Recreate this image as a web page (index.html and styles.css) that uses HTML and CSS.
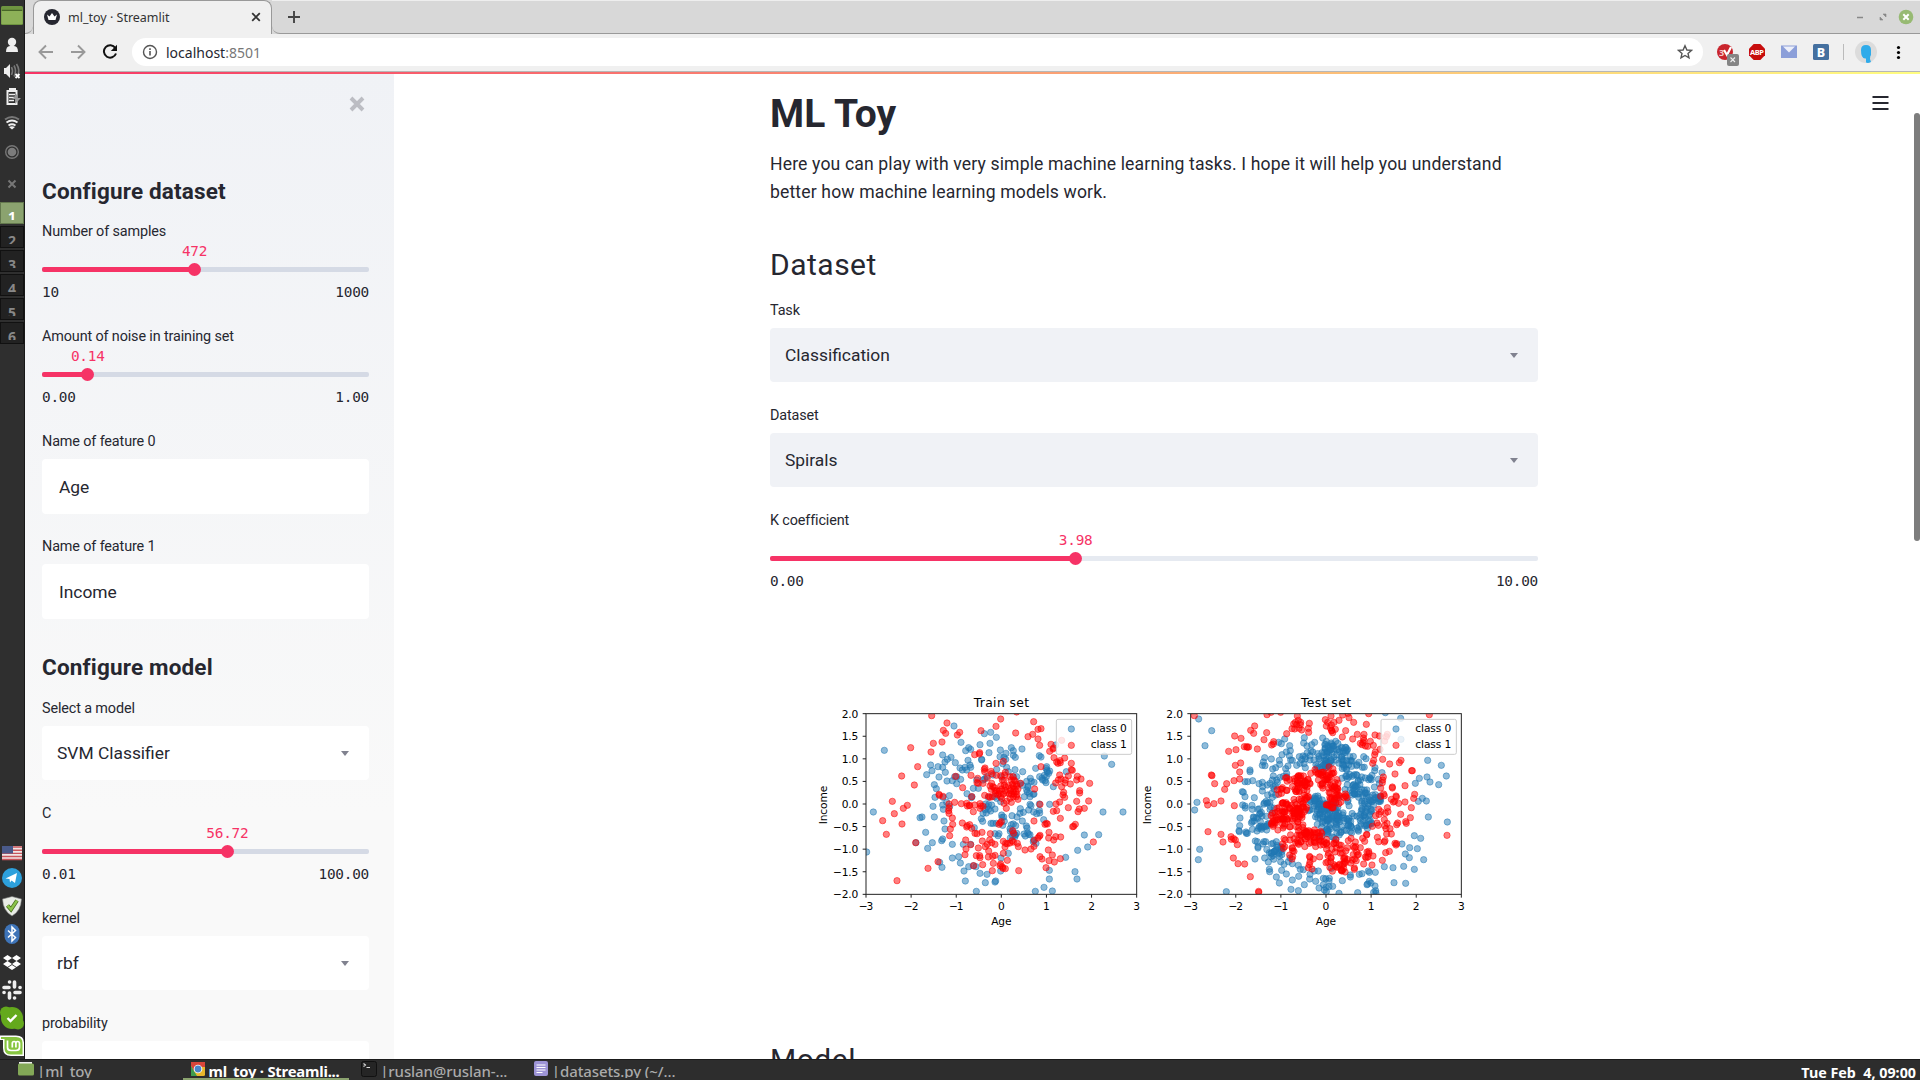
FILE: index.html
```html
<!DOCTYPE html>
<html lang="en">
<head>
<meta charset="utf-8">
<title>ml_toy · Streamlit</title>
<link rel="stylesheet" href="styles.css">
</head>
<body>
<div class="desktop">
  <aside class="panel">
    <div class="tray tray-top">
      <svg class="ic-folder" viewBox="0 0 24 30"><rect x="1" y="5" width="22" height="19" rx="1.500" fill="#6e9440"/><path d="M1.500 10h21v13h-21z" fill="#8db158"/><path d="M2 9.300h20" stroke="#3f5a22" stroke-width="1"/></svg>
      <svg class="ic" viewBox="0 0 24 26"><circle cx="12" cy="10" r="4.200" fill="#eee"/><path d="M6 20q0-6 4-6h4q4 0 4 6z" fill="#eee"/></svg>
      <svg class="ic" viewBox="0 0 24 26"><path d="M4 10h2l4-4v14l-4-4h-2z" fill="#eee"/><path d="M11.500 9q2 4 0 8M14 7.500q3 5.500 0 11M16.500 6q4 6 1 12" fill="none" stroke="#777" stroke-width="1.600"/><path d="M15.500 16l4 4m0-4l-4 4" stroke="#fff" stroke-width="1.800"/></svg>
      <svg class="ic" viewBox="0 0 24 26"><path d="M10 6.500V5h5v1.500M7.500 7h9v13h-9z" fill="none" stroke="#eee" stroke-width="2"/><path d="M9 10.500h6M9 13.500h6M9 16.500h5" stroke="#eee" stroke-width="1.300"/><path d="M17 10l-5 5h4l-1 5 6-6h-4z" fill="#999"/></svg>
      <svg class="ic" viewBox="0 0 24 26"><path d="M5 9.500q7-5 14 0" fill="none" stroke="#777" stroke-width="2"/><path d="M6.500 12.500q5.500-4 11 0M8.500 15.500q3.500-2.500 7 0" fill="none" stroke="#eee" stroke-width="1.800"/><path d="M12 19.500l-3-2.500q3-1.500 6 0z" fill="#eee"/></svg>
      <svg class="ic-rec" viewBox="0 0 24 32"><circle cx="12" cy="16" r="6.300" fill="none" stroke="#777" stroke-width="1.400"/><circle cx="12" cy="16" r="4.300" fill="#7c7c7c"/></svg>
      <svg class="ic-rec" viewBox="0 0 24 32"><path d="M8.500 12.500l7 7m0-7l-7 7" stroke="#777" stroke-width="2"/></svg>
    </div>
    <div class="workspaces">
      <div class="ws on"><span>1</span></div><div class="ws"><span>2</span></div><div class="ws"><span>3</span></div>
      <div class="ws"><span>4</span></div><div class="ws"><span>5</span></div><div class="ws"><span>6</span></div>
    </div>
    <div class="tray tray-bottom">
      <svg class="ic-flag" viewBox="0 0 24 22"><path d="M2 4h20v14H2z" fill="#f0e6e6"/><path d="M2 5h20M2 8.200h20M2 11.400h20M2 14.500h20M2 17.500h20" stroke="#c9555b" stroke-width="1.400"/><path d="M2 4h11v7.500H2z" fill="#4a5a8a"/></svg>
      <svg class="ic-app" viewBox="0 0 24 28"><circle cx="12" cy="14" r="10" fill="#2da0dc"/><path d="M5.500 14.500L17 9l-2 10-3.500-2.500-1.500 2-.5-3.500z" fill="#fff"/></svg>
      <svg class="ic-app" viewBox="0 0 24 28"><path d="M12 4.500l9.500 2.500q-.5 12-9.500 17Q3 19 2.500 7z" fill="#e9ece6" stroke="#777" stroke-width=".6"/><path d="M7.500 13.500l3.500 4L17 8.500" fill="none" stroke="#456b1c" stroke-width="4"/><path d="M7.500 13.500l3.500 4L17 8.500" fill="none" stroke="#8bc34a" stroke-width="2.400"/></svg>
      <svg class="ic-app" viewBox="0 0 24 28"><rect x="4.500" y="4" width="15" height="20" rx="7.500" fill="#3e74b8"/><path d="M8 10.500l7.500 7L12 21V7l3.500 3.500-7.500 7" fill="none" stroke="#fff" stroke-width="1.500"/></svg>
      <svg class="ic-app" viewBox="0 0 24 28"><path d="M7.500 7l4.500 3-4.500 3L3 10zM16.500 7l4.500 3-4.500 3-4.500-3zM7.500 13l4.500 3-4.500 3L3 16zM16.500 13l4.500 3-4.500 3-4.500-3zM12 17l4 2.500-4 2.500-4-2.500z" fill="#fff"/></svg>
      <svg class="ic-app" viewBox="0 0 24 28"><path d="M14.500 6v5M20 16.500h-5M9.500 22v-5M4 11.500h5" stroke="#eee" stroke-width="3.600" stroke-linecap="round"/><path d="M9.500 6h.1M20 11.500h.1M14.500 22h.1M4 16.500h.1" stroke="#eee" stroke-width="3.600" stroke-linecap="round"/></svg>
      <svg class="ic-app" viewBox="0 0 24 28"><circle cx="12" cy="14" r="11" fill="#64a91c"/><circle cx="6" cy="8.500" r="6" fill="#64a91c"/><circle cx="18" cy="19.500" r="6" fill="#64a91c"/><path d="M7.500 14l3 3 6-6" fill="none" stroke="#fff" stroke-width="2.400"/></svg>
      <svg class="ic-app" viewBox="0 0 24 28"><path d="M0 3.500h16q8 0 8 7V24H11q-8 0-8-8V8H0z" fill="#fff"/><path d="M1 5h15q6.500 0 6.500 6v11.500H11q-6.500 0-6.500-6V7H1z" fill="#87c540"/><path d="M7.500 8.500v7q0 3 3.500 3h5q3.500 0 3.500-3v-4q0-2-1.800-2t-1.800 2v4m0-4q0-2-1.800-2t-1.800 2v4" fill="none" stroke="#fff" stroke-width="1.700"/></svg>
    </div>
  </aside>

  <main class="browser">
    <div class="tabs">
      <div class="tab-edge"></div>
      <div class="tab">
        <svg class="fav" viewBox="0 0 16 16"><circle cx="8" cy="8" r="8" fill="#262730"/><path d="M3 5.500l2.500 2L8 4l2.500 3.500 2.500-2-1.500 5.500h-7z" fill="#fff"/></svg>
        <span class="tab-title">ml_toy · Streamlit</span>
        <svg class="tab-x" viewBox="0 0 10 10"><path d="M1.200 1.200l7.600 7.600m0-7.600L1.200 8.800" stroke="#333" stroke-width="1.800"/></svg>
      </div>
      <div class="tab-rest">
        <svg class="plus" viewBox="0 0 12 12"><path d="M6 0v12M0 6h12" stroke="#444" stroke-width="1.900"/></svg>
        <svg class="winctl" viewBox="0 0 60 16"><path d="M3 8.500h6" stroke="#888" stroke-width="1.500"/><path d="M29 5h3v3zM26 8v3h3z" fill="#888" stroke="#888" stroke-width=".6"/><circle cx="52" cy="8" r="7.300" fill="#97ba73"/><path d="M49.300 5.300l5.400 5.400m0-5.400l-5.400 5.400" stroke="#fff" stroke-width="2"/></svg>
      </div>
    </div>
    <div class="toolbar">
      <svg class="nav" viewBox="0 0 16 16"><path d="M15 8H2M8 1.500L1.500 8 8 14.500" fill="none" stroke="#999" stroke-width="1.900"/></svg>
      <svg class="nav" viewBox="0 0 16 16"><path d="M1 8h13M8 1.500L14.500 8 8 14.500" fill="none" stroke="#999" stroke-width="1.900"/></svg>
      <svg class="nav" viewBox="0 0 16 16"><path d="M13.300 4A6.200 6.200 0 1 0 14 9.500" fill="none" stroke="#111" stroke-width="2"/><path d="M15 .8v6.200H8.800z" fill="#111"/></svg>
      <div class="url">
        <svg class="info" viewBox="0 0 16 16"><circle cx="8" cy="8" r="6.500" fill="none" stroke="#555" stroke-width="1.400"/><path d="M8 7v4.500M8 4.300v1.600" stroke="#555" stroke-width="1.600"/></svg>
        <span class="addr">localhost<i>:8501</i></span>
        <svg class="star" viewBox="0 0 16 16"><path d="M8 1.800l1.900 4.200 4.500.4-3.400 3 1 4.500L8 11.500l-4 2.400 1-4.500-3.400-3L6.100 6z" fill="none" stroke="#555" stroke-width="1.400"/></svg>
      </div>
      <svg class="exts" viewBox="0 0 208 38">
        <circle cx="16" cy="19" r="8" fill="#c9252d"/><text x="10" y="22.500" font-size="9" font-weight="700" fill="#f3c8ca">3</text><path d="M15 17l3 5 4-8" fill="none" stroke="#fff" stroke-width="2.200"/><rect x="18" y="21" width="12" height="12" rx="2" fill="#858585"/><path d="M21.500 24.500l4.500 4.500m0-4.500l-4.500 4.500" stroke="#eee" stroke-width="1.100"/>
        <path d="M44.700 11h6.600l4.700 4.700v6.600l-4.700 4.700h-6.600l-4.700-4.700v-6.600z" fill="#c70d0d"/><text x="48" y="21.800" text-anchor="middle" font-size="7.500" font-weight="700" fill="#fff" textLength="14">ABP</text>
        <path d="M72 12.500h16v12.500H72z" fill="#8c9fd9"/><path d="M74 13.500h12l-6 6z" fill="#edf0fa"/>
        <rect x="104" y="11" width="16" height="16" rx="1.500" fill="#45709f"/><text x="112" y="23.500" text-anchor="middle" font-size="12.500" font-weight="800" fill="#fff">B</text>
        <path d="M134.500 11v16" stroke="#bbb"/>
        <circle cx="157" cy="19" r="11" fill="#dcdcdc"/><path d="M152 17q0-5 5-5t5 5v5q-1 1-1 4l1 3q-3 1.500-5 .5v-4q-5 1-5-8.500z" fill="#2fabea"/>
        <circle cx="189.500" cy="14.500" r="1.600"/><circle cx="189.500" cy="19.500" r="1.600"/><circle cx="189.500" cy="24.500" r="1.600"/>
      </svg>
    </div>
    <div class="rainbow"></div>
    <div class="page">
      <section class="sidebar">
        <div class="side-top"><svg class="close" viewBox="0 0 16 16"><path d="M2 2l12 12M14 2L2 14" stroke="#bcbdc3" stroke-width="3.900"/></svg></div>
        <h2 class="first">Configure dataset</h2>
        <div class="widget"><label>Number of samples</label>
          <div class="slider"><div class="value" style="width:93.300%">472</div><div class="track"><div class="fill" style="width:46.800%"></div></div><div class="ticks"><span>10</span><span>1000</span></div></div></div>
        <div class="widget"><label>Amount of noise in training set</label>
          <div class="slider"><div class="value" style="width:28%">0.14</div><div class="track"><div class="fill" style="width:14%"></div></div><div class="ticks"><span>0.00</span><span>1.00</span></div></div></div>
        <div class="widget"><label>Name of feature 0</label><div class="box input">Age</div></div>
        <div class="widget"><label>Name of feature 1</label><div class="box input">Income</div></div>
        <h2>Configure model</h2>
        <div class="widget"><label>Select a model</label><div class="box"><span>SVM Classifier</span><b class="caret"></b></div></div>
        <div class="widget"><label>C</label>
          <div class="slider"><div class="value" style="width:113.400%">56.72</div><div class="track"><div class="fill" style="width:57%"></div></div><div class="ticks"><span>0.01</span><span>100.00</span></div></div></div>
        <div class="widget"><label>kernel</label><div class="box"><span>rbf</span><b class="caret"></b></div></div>
        <div class="widget"><label>probability</label><div class="box"></div></div>
      </section>
      <section class="content">
        <div class="column">
          <h1>ML Toy</h1>
          <p>Here you can play with very simple machine learning tasks. I hope it will help you understand<br>better how machine learning models work.</p>
          <h3>Dataset</h3>
          <div class="widget"><label>Task</label><div class="box"><span>Classification</span><b class="caret"></b></div></div>
          <div class="widget"><label>Dataset</label><div class="box"><span>Spirals</span><b class="caret"></b></div></div>
          <div class="widget"><label>K coefficient</label>
            <div class="slider"><div class="value" style="width:79.600%">3.98</div><div class="track"><div class="fill" style="width:39.800%"></div></div><div class="ticks"><span>0.00</span><span>10.00</span></div></div></div>
          <svg id="chart" class="chart" viewBox="0 0 2304 780"></svg>
          <h3 class="model">Model</h3>
        </div>
        <svg class="burger" viewBox="0 0 16 14"><path d="M0 1h16M0 7h16M0 13h16" stroke="#262730" stroke-width="2"/></svg>
        <div class="scrollbar"></div>
      </section>
    </div>
  </main>

  <footer class="taskbar">
    <div class="task"><svg viewBox="0 0 16 16"><path d="M1 1h13v3H1z" fill="#eee"/><rect y="2.500" width="16" height="12" rx="1.500" fill="#83a857"/></svg><span>|ml_toy</span></div>
    <div class="task on"><svg viewBox="0 0 16 16"><rect x="1" y="1" width="14" height="14" rx="1.500" fill="#e8b72c"/><path d="M1 1h14v5H8L4 10 1 5z" fill="#d8453a"/><path d="M1 5l6 10H1z" fill="#3d9b4e"/><circle cx="8" cy="8" r="4.300" fill="#fff"/><circle cx="8" cy="8" r="3.400" fill="#4a85c9"/></svg><span>ml_toy · Streamli...</span></div>
    <div class="task"><svg viewBox="0 0 16 16"><rect x=".5" y=".5" width="15" height="15" rx="2" fill="#252525" stroke="#111"/><path d="M2.500 2.500l2 1.500-2 1.500M5.500 6.500h3.500" fill="none" stroke="#ddd" stroke-width="1.100"/></svg><span>|ruslan@ruslan-...</span></div>
    <div class="task"><svg viewBox="0 0 16 16"><rect x="1" width="14" height="15" rx="2" fill="#9d94d6"/><path d="M3.500 4h9M3.500 6.500h9M3.500 9h9M3.500 11.500h6" stroke="#fff" stroke-width="1.200"/></svg><span>|datasets.py (~/...</span></div>
    <div class="clock">Tue Feb &nbsp;4, 09:00</div>
  </footer>
</div>
<script src="chart.js"></script>
</body>
</html>
```
FILE: styles.css
```css
* { box-sizing: border-box; }
body { margin: 0; overflow: hidden; font-family: Roboto, "Noto Sans", sans-serif; color: #262730; }
svg { display: block; flex: none; }
.desktop { display: grid; grid-template-columns: 25px 1fr; grid-template-rows: 1059px 21px; width: 1920px; height: 1080px; background: #2d2d2d; }

/* left panel */
.panel { display: flex; flex-direction: column; background: #2f2f2f; border-right: 1px solid #181818; }
.ic-folder { width: 24px; height: 32px; }
.ic { width: 24px; height: 26px; }
.ic-rec { width: 24px; height: 32px; }
.workspaces { display: flex; flex-direction: column; gap: 2px; margin-top: 2px; }
.ws { height: 22px; background: #222; border: 1px solid #111; font: bold 14px/20px "Noto Sans", sans-serif; color: #888; text-align: center; padding-top: 4px; }
.ws span { display: block; height: 13px; overflow: hidden; }
.ws.on { background: #8ba36f; border-color: #63784d; color: #fff; }
.tray-bottom { margin-top: auto; margin-bottom: -1px; }
.ic-flag { width: 24px; height: 22px; }
.ic-app { width: 24px; height: 28px; }

/* browser chrome */
.browser { display: flex; flex-direction: column; min-width: 0; overflow: hidden; background: #fff; }
.tabs { display: flex; height: 34px; background: #d8d8d8; font-family: "Noto Sans", sans-serif; }
.tab-edge { width: 8px; border: solid #999; border-width: 0 0 1px; border-radius: 0 0 8px 0; }
.tab { display: flex; align-items: center; width: 239px; height: 34px; background: #f0f0f0; border: 1px solid #999; border-bottom: 0; border-radius: 8px 8px 0 0; padding: 0 10px 1px 10px; }
.fav { width: 16px; height: 16px; margin-right: 8px; }
.tab-title { font-size: 12.500px; flex: 1; color: #333; }
.tab-x { width: 10px; height: 10px; }
.tab-rest { flex: 1; display: flex; align-items: center; justify-content: space-between; border: solid #999; border-width: 0 0 1px; border-radius: 0 0 0 8px; padding: 0 6px 1px 16px; border-top: 1px solid #eee; }
.plus { width: 12px; height: 12px; }
.winctl { width: 60px; height: 16px; }
.toolbar { display: flex; align-items: center; height: 38px; background: #f0f0f0; border-bottom: 1px solid #b7b7b7; padding-bottom: 1px; font-family: "Noto Sans", sans-serif; }
.nav { width: 16px; height: 16px; margin-left: 13px; margin-right: 3px; }
.url { display: flex; align-items: center; width: 1571px; height: 28px; border-radius: 14px; background: #fff; margin-left: 11px; padding: 0 10px; flex: none; }
.info { width: 16px; height: 16px; margin-right: 8px; }
.addr { flex: 1; font-size: 14px; }
.addr i { font-style: normal; color: #777; }
.star { width: 16px; height: 16px; }
.exts { width: 208px; height: 38px; margin-left: 6px; }
.rainbow { height: 2px; flex: none; background: linear-gradient(90deg, #f63366, #fffd80); }

/* app */
.page { flex: 1; display: flex; min-height: 0; }
.sidebar { width: 369px; padding: 0 25px 0 17px; background: linear-gradient(180deg, #f0f2f6, #f9f9f9 75%); overflow: hidden; flex: none; }
.side-top { display: flex; justify-content: flex-end; height: 90px; padding: 22px 4px 0 0; }
.close { width: 16px; height: 16px; }
h2 { margin: 0; height: 57px; padding-top: 10px; font-size: 22.500px; line-height: 34px; font-weight: 700; letter-spacing: .17px; white-space: nowrap; }
h2.first { height: 56px; }
.widget { height: 105px; }
label { display: block; height: 29px; font-size: 14.400px; line-height: 23px; letter-spacing: -.13px; white-space: nowrap; }
.box { display: flex; align-items: center; justify-content: space-between; height: 54px; background: #fff; border-radius: 4px; padding: 0 20px 0 15px; font-size: 17.400px; }
.box.input { height: 55px; padding-left: 17px; }
.caret { border: solid transparent; border-width: 5px 4px 0; border-top-color: #80828f; }
.slider { margin-top: -8px; font-family: "DejaVu Sans Mono", monospace; font-size: 14.400px; letter-spacing: -.25px; }
.value { height: 26px; line-height: 20px; text-align: center; color: #f63366; }
.track { height: 5px; border-radius: 2px; background: #d5dae5; }
.fill { height: 5px; border-radius: 2px; background: #f63366; display: flex; justify-content: flex-end; align-items: center; }
.fill::after { content: ""; width: 13px; height: 13px; border-radius: 50%; background: #f63366; margin-right: -6px; flex: none; }
.ticks { display: flex; justify-content: space-between; line-height: 19px; padding-top: 11px; }
.content { position: relative; flex: 1; overflow: hidden; }
.column { width: 768px; margin-left: 376px; }
h1 { margin: 0; height: 76px; padding-top: 16px; font-size: 39px; line-height: 48px; font-weight: 700; }
p { margin: 0; height: 84px; font-size: 17.600px; line-height: 28px; letter-spacing: .135px; white-space: nowrap; }
h3 { margin: 0; height: 65px; padding-top: 11px; font-size: 30px; line-height: 40px; font-weight: 400; letter-spacing: .5px; }
.content .box { background: #f0f2f6; }
.content .track { background: #e6eaf1; }
.chart { width: 768px; height: 260px; margin-top: 66px; font-family: "DejaVu Sans", sans-serif; }
.model { padding-top: 100px; height: 150px; }
.burger { position: absolute; right: 31px; top: 22px; width: 17px; height: 14px; }
.scrollbar { position: absolute; right: 0; top: 39px; width: 6px; height: 428px; border-radius: 3px; background: #7d7d7d; }

/* bottom bar */
.taskbar { grid-column: 1 / 3; display: flex; background: #2d2d2d; border-top: 1px solid #1a1a1a; font: 500 15px/23px "Noto Sans", sans-serif; color: #aaa; padding-left: 11px; overflow: hidden; }
.task { display: flex; gap: 3px; width: 166px; margin-right: 5.600px; padding-left: 7px; height: 20px; overflow: hidden; white-space: nowrap; }
.task span { height: 18px; overflow: hidden; letter-spacing: -.1px; }
.task svg { width: 16px; height: 16px; margin-top: 1px; }
.task.on { color: #fff; font-weight: 700; border-bottom: 2px solid #8ba36f; }
.task.on span { font-size: 14.800px; letter-spacing: -.2px; }
.clock { margin-left: auto; padding-right: 4px; font-weight: 700; font-size: 14.300px; line-height: 25px; color: #fff; white-space: nowrap; }
```
FILE: chart.js
```js
// Scatter plots: each plot has its own origin; points are in drawing units.
const trainBlue = "253,211 462,138 553,161 572,157 589,172 483,187 540,194 570,190 567,218 601,210 634,203 666,207 497,212 512,208 506,203 428,225 453,232 442,238 466,248 480,264 504,241 512,262 487,270 495,262 435,246 428,262 414,260 436,277 392,255 396,272 380,284 417,291 441,303 457,302 470,311 482,298 403,314 409,326 405,352 399,379 403,411 366,411 360,413 377,457 435,447 432,423 428,375 448,347 440,367 430,388 449,379 429,352 545,238 600,230 618,220 640,226 646,232 617,238 608,251 645,269 668,275 707,265 718,227 723,231 738,265 742,276 733,286 719,290 735,302 738,308 749,273 741,271 767,195 799,275 760,320 691,295 680,304 684,318 694,304 682,336 684,322 702,307 728,300 702,342 749,373 718,372 690,373 693,377 686,390 718,391 701,396 710,401 731,419 719,399 667,423 679,438 681,444 683,458 686,463 676,468 672,462 690,464 701,480 646,465 638,455 645,470 631,474 660,400 670,397 661,386 651,411 636,407 647,437 634,434 606,412 613,424 608,436 597,461 594,467 585,461 589,430 573,430 579,430 566,388 562,380 566,374 572,393 555,389 559,399 565,352 584,350 549,400 544,416 548,424 523,443 605,405 611,411 631,454 645,465 554,297 520,325 501,341 514,353 516,350 348,488 397,488 425,482 428,477 457,493 490,493 512,493 383,505 419,547 426,562 457,534 476,530 481,549 492,573 506,560 520,557 528,560 540,580 561,583 602,573 603,534 625,520 556,608 587,603 585,606 529,634 496,603 706,634 757,633 732,622 748,597 748,571 797,532 833,511 825,575 831,597 863,501 853,465 896,464 909,396 969,396 913,228 935,253 220,396 200,516 700,485 708,490 700,343 667,316 650,290 590,268 579,285 605,290 625,275 640,290 660,310 620,262 612,232 640,212 549,300 560,290 535,325 530,300 545,240 739,290 746,280 726,295 740,260 688,340 673,350 690,350 680,330 638,468 650,460 630,446 640,432 575,375 590,355 602,365 585,387 557,372 470,290 464,290 510,255 500,270";
const trainRed = "395,107 441,129 430,151 437,160 479,157 472,165 543,152 602,117 588,139 650,96 647,159 701,125 723,146 714,148 698,163 684,170 714,177 719,196 753,193 759,207 749,214 761,204 785,181 426,186 400,190 393,216 332,203 353,260 305,288 343,315 277,364 322,376 310,385 283,401 306,432 248,422 259,463 291,602 347,488 384,565 414,545 539,218 538,222 524,224 610,244 588,250 723,260 762,233 770,246 774,250 781,248 794,234 780,242 814,250 814,269 817,271 832,289 830,300 843,297 869,310 779,285 783,297 775,300 805,288 795,309 811,312 767,309 785,320 796,300 839,332 839,339 791,337 794,352 789,345 830,364 866,363 853,385 838,387 834,395 805,383 779,366 768,372 770,392 760,394 781,415 720,373 704,327 702,423 739,430 742,432 735,433 826,433 821,439 818,440 880,486 747,457 720,466 718,469 714,474 746,474 761,480 767,470 782,471 703,481 702,499 693,507 675,510 745,510 757,525 720,530 726,537 781,536 747,542 763,546 738,563 656,572 418,346 429,349 488,323 467,289 513,286 417,343 447,372 447,384 446,392 447,400 457,414 458,433 451,447 449,467 464,367 484,371 500,370 509,376 502,378 515,350 524,375 520,395 508,377 540,371 543,378 540,385 549,379 487,429 502,437 509,434 500,441 515,445 531,461 525,460 546,457 571,461 497,480 512,494 498,507 495,524 535,504 547,483 529,527 539,527 540,533 521,557 548,554 562,493 556,500 566,513 565,531 578,529 585,526 580,550 577,572 575,488 585,493 569,480 602,552 600,557 607,561 616,566 609,565 622,541 610,520 610,484 617,490 615,501 622,491 630,489 636,482 640,486 652,490 655,500 641,460 638,452 600,429 597,433 604,425 619,385 605,355 555,264 554,275 553,268 573,274 575,281 562,294 533,295 535,310 531,308 549,310 570,318 575,310 589,286 602,287 616,277 614,285 554,346 566,349 570,352 577,350 579,320 583,323 585,332 574,328 587,341 590,332 598,333 602,318 605,327 598,340 610,342 613,316 617,321 616,332 625,317 630,290 639,290 642,300 634,300 637,313 640,319 650,318 634,324 643,327 654,327 631,332 639,335 648,335 635,343 642,342 651,344 628,342 619,338 630,355 640,350 649,350 654,358 634,367 620,364 612,370 662,310 650,313 612,301 607,300 645,303 602,350 594,344";
const testBlue = "206,117 245,152 225,197 201,367 194,390 209,508 205,539 289,635 360,270 360,275 345,305 353,305 368,302 337,335 340,337 345,350 373,353 338,375 345,378 346,384 366,376 367,388 403,369 420,368 411,370 330,414 329,437 327,452 328,455 348,456 352,460 349,460 381,453 370,411 372,423 383,415 389,403 396,408 394,397 409,409 388,440 395,448 402,440 412,437 417,430 410,450 376,483 382,485 384,500 384,504 402,485 407,485 399,492 375,537 404,534 418,568 419,575 415,546 424,530 418,518 428,527 433,514 438,509 446,518 453,509 429,490 439,485 441,496 446,522 439,591 448,609 455,571 469,582 452,545 462,553 475,545 480,534 487,551 505,556 511,568 520,569 487,600 506,589 483,628 505,632 540,583 539,597 523,614 557,604 567,624 553,573 565,573 580,595 587,596 598,595 597,603 580,614 588,622 597,620 608,619 589,635 627,640 637,602 604,565 583,630 661,591 661,585 688,583 696,581 683,638 715,573 718,577 736,577 735,618 737,632 731,637 738,639 718,604 713,612 723,609 711,614 766,98 812,115 813,178 893,241 934,256 949,288 891,291 868,295 900,306 926,314 856,310 895,411 952,426 877,355 889,363 865,364 853,467 872,475 839,503 862,506 816,492 826,522 838,533 881,539 821,559 853,568 789,563 763,560 792,608 827,610 404,233 400,246 397,256 405,257 424,237 448,241 437,263 428,267 449,253 427,300 430,288 387,311 397,307 398,320 397,333 412,315 456,224 454,191 446,187 464,177 479,197 469,216 481,212 478,227 487,241 482,240 467,266 474,258 470,280 523,173 521,189 531,198 545,194 554,187 543,213 540,227 508,230 519,228 526,237 515,239 522,251 526,263 500,256 510,250 540,240 578,174 589,184 587,193 617,184 606,193 634,202 701,230 708,236 735,263 734,272 697,262 681,254 745,298 756,278 719,293 726,286 724,299 716,299 748,311 413,345 425,340 420,310 430,320 440,300 450,292 460,289 470,290 442,307 436,318 432,327 437,345 427,352";
const testRed = "193,107 314,168 333,175 362,151 371,160 374,138 410,158 411,104 423,97 452,97 402,179 431,185 430,192 425,195 382,207 350,200 352,202 343,200 356,201 318,209 296,214 316,256 332,249 329,276 329,297 312,302 244,285 246,287 254,311 290,311 284,328 229,362 233,375 252,371 273,363 313,377 234,455 273,463 303,470 304,478 311,476 316,480 279,486 322,494 310,534 324,551 344,552 361,590 386,634 386,637 502,108 505,121 496,127 500,134 512,127 491,132 511,134 486,146 494,147 507,145 515,150 470,161 538,130 535,145 536,157 586,119 593,127 589,138 603,108 604,135 601,144 612,127 627,121 605,151 608,158 616,148 605,153 647,152 637,171 638,105 654,100 657,113 671,127 682,163 702,163 709,133 716,101 668,177 700,174 691,190 699,188 696,194 706,198 713,199 702,181 721,184 730,196 735,165 748,168 758,238 728,250 731,241 734,224 736,216 750,208 764,183 769,170 772,163 779,252 808,248 813,241 795,282 760,291 758,300 757,308 752,324 787,321 787,324 825,317 854,343 845,272 847,272 898,104 951,466 799,351 794,364 806,370 798,348 761,342 763,347 752,349 784,358 790,366 825,366 851,355 844,383 841,413 812,403 827,425 829,430 803,429 800,434 772,383 774,395 766,400 746,388 753,395 747,403 737,407 741,429 763,419 771,430 764,437 780,446 768,446 745,436 727,439 770,462 784,462 765,482 763,486 742,472 746,485 778,514 767,518 795,490 800,491 798,495 757,541 710,463 710,465 698,475 704,484 663,475 655,482 676,486 677,500 691,503 716,514 717,520 709,533 714,531 726,555 706,531 701,552 673,564 673,568 729,528 711,516 593,546 588,548 602,545 546,567 535,563 540,546 538,554 486,537 488,530 492,514 479,525 460,505 464,500 458,492 480,480 497,487 513,485 466,480";

// Small deterministic generator for the crowded middle of the spirals.
let seed = 7;
const rnd = () => (seed = (seed * 16807) % 2147483647) / 2147483647;
function cloud(cx, cy, rx, ry, n) {
  const out = [];
  for (let i = 0; i < n; i++) {
    const a = rnd() * Math.PI * 2, r = Math.sqrt(rnd());
    out.push([cx + rx * r * Math.cos(a), cy + ry * r * Math.sin(a)]);
  }
  return out;
}
const parse = s => s.split(" ").map(p => p.split(",").map(Number));
const blueClouds = [[610,230,52,44,58],[560,240,45,30,20],[665,265,38,37,18],[665,315,38,34,24],[700,330,38,42,18],[718,375,35,42,30],[560,385,28,38,36],[590,410,36,42,34],[635,390,32,44,22],[625,440,54,34,36],[690,425,38,40,32],[600,465,35,16,10],[435,515,28,28,14],[385,433,34,24,10],[410,398,30,35,12],[735,355,20,15,8]];
const redClouds = [[585,275,42,17,14],[515,305,25,22,24],[560,298,42,24,16],[600,320,30,36,20],[610,360,25,30,26],[645,350,8,10,5],[480,315,28,28,11],[455,350,25,32,9],[515,350,24,34,20],[470,395,38,30,32],[515,385,18,22,16],[445,420,24,32,24],[490,425,38,27,18],[545,465,34,18,24],[510,465,34,28,12],[480,485,32,32,8],[570,485,28,20,12],[608,505,34,28,14],[640,530,46,44,30],[630,565,32,15,9],[545,515,30,35,7]];

const dots = (pts, color) => pts.map(([x, y]) => `<circle cx="${x.toFixed(1)}" cy="${y.toFixed(1)}" r="9.500" fill="${color}" fill-opacity=".5" stroke="${color}" stroke-opacity=".5" stroke-width="3"/>`).join("");
const t = (x, y, s, anchor, len, size = 32) => `<text x="${x}" y="${y}" font-size="${size}" text-anchor="${anchor}" textLength="${len}">${s}</text>`;

function plot(ox, left, title, titleLen, blue, red) {
  const w = 812, top = 101, h = 542, id = "clip" + ox;
  let s = `<g transform="translate(${ox} 0)"><clipPath id="${id}"><rect x="${left}" y="${top}" width="${w}" height="${h}"/></clipPath>`;
  s += `<g clip-path="url(#${id})">${dots(blue, "#1f77b4")}${dots(red, "#ff0000")}</g>`;
  s += `<rect x="${left}" y="${top}" width="${w}" height="${h}" fill="none" stroke="#222" stroke-width="3"/>`;
  s += t(left + w / 2, 80, title, "middle", titleLen, 37);
  for (let i = 0; i <= 6; i++) {
    const x = left + w * i / 6, v = i - 3;
    s += `<path d="M${x} 643v10" stroke="#222" stroke-width="3"/>` + t(x, 690, v < 0 ? "−" + -v : v, "middle", v < 0 ? 44 : 18);
  }
  for (let i = 0; i <= 8; i++) {
    const y = top + h * i / 8, v = 2 - i / 2;
    s += `<path d="M${left - 10} ${y}h10" stroke="#222" stroke-width="3"/>` + t(left - 23, y + 12, (v < 0 ? "−" : "") + Math.abs(v).toFixed(1), "end", v < 0 ? 76 : 50);
  }
  s += t(left + w / 2, 734, "Age", "middle", 61);
  s += `<g transform="translate(${left - 118} 375) rotate(-90)">${t(0, 0, "Income", "middle", 116)}</g>`;
  s += `<rect x="${left + 571}" y="118" width="226" height="105" rx="5" fill="#fff" fill-opacity=".8" stroke="#ccc" stroke-width="3"/>`;
  s += dots([[left + 616, 147]], "#1f77b4") + dots([[left + 616, 196]], "#ff0000");
  s += t(left + 674, 155, "class 0", "start", 108) + t(left + 674, 204, "class 1", "start", 108);
  return s + "</g>";
}

document.getElementById("chart").innerHTML =
  plot(90, 198, "Train set", 166, parse(trainBlue), parse(trainRed)) +
  plot(1080, 182, "Test set", 150,
    parse(testBlue).concat(...blueClouds.map(c => cloud(...c))),
    parse(testRed).concat(...redClouds.map(c => cloud(...c))));
```
